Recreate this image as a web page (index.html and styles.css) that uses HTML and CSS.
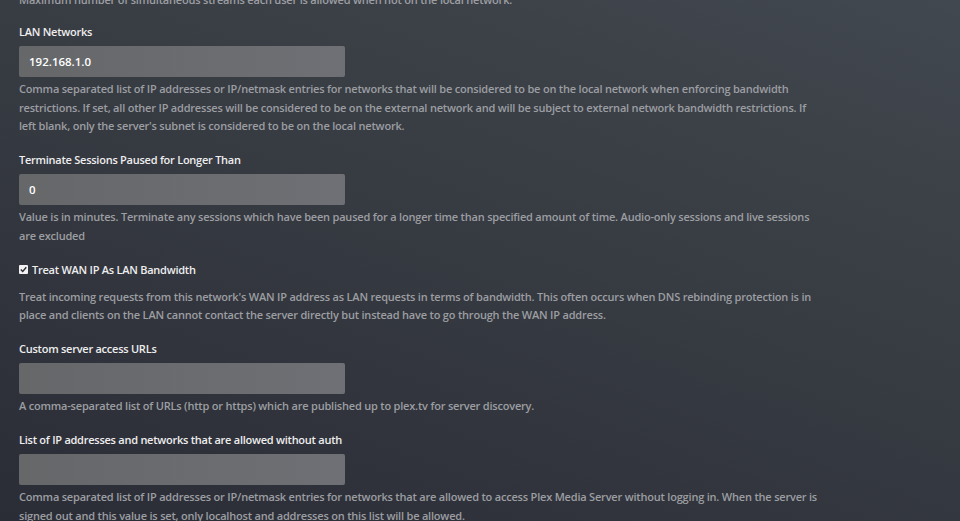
FILE: index.html
```html
<!DOCTYPE html>
<html lang="en">
<head>
<meta charset="utf-8">
<title>Network Settings</title>
<link rel="stylesheet" href="styles.css">
</head>
<body>
<main class="settings">
  <div class="group group-first">
    <p class="help help-top">Maximum number of simultaneous streams each user is allowed when not on the local network.</p>
  </div>

  <div class="group">
    <label class="label" for="lan">LAN Networks</label>
    <input class="field" id="lan" type="text" value="192.168.1.0">
    <p class="help">Comma separated list of IP addresses or IP/netmask entries for networks that will be considered to be on the local network when enforcing bandwidth restrictions. If set, all other IP addresses will be considered to be on the external network and will be subject to external network bandwidth restrictions. If left blank, only the server's subnet is considered to be on the local network.</p>
  </div>

  <div class="group">
    <label class="label" for="term">Terminate Sessions Paused for Longer Than</label>
    <input class="field" id="term" type="text" value="0">
    <p class="help">Value is in minutes. Terminate any sessions which have been paused for a longer time than specified amount of time. Audio-only sessions and live sessions are excluded</p>
  </div>

  <div class="group">
    <label class="check-label"><span class="check"><svg viewBox="0 0 9 9" width="9" height="9"><rect x="0" y="0" width="9" height="9" rx="1" fill="#f2f2f2"/><path d="M1.8 4.6 L3.7 6.5 L7.3 2.2" fill="none" stroke="#2b2d33" stroke-width="1.4"/></svg></span>Treat WAN IP As LAN Bandwidth</label>
    <p class="help help-check">Treat incoming requests from this network's WAN IP address as LAN requests in terms of bandwidth. This often occurs when DNS rebinding protection is in place and clients on the LAN cannot contact the server directly but instead have to go through the WAN IP address.</p>
  </div>

  <div class="group">
    <label class="label" for="urls">Custom server access URLs</label>
    <input class="field" id="urls" type="text" value="">
    <p class="help">A comma-separated list of URLs (http or https) which are published up to plex.tv for server discovery.</p>
  </div>

  <div class="group">
    <label class="label" for="noauth">List of IP addresses and networks that are allowed without auth</label>
    <input class="field" id="noauth" type="text" value="">
    <p class="help">Comma separated list of IP addresses or IP/netmask entries for networks that are allowed to access Plex Media Server without logging in. When the server is signed out and this value is set, only localhost and addresses on this list will be allowed.</p>
  </div>
</main>
</body>
</html>
```

FILE: styles.css
```css
html, body {
  margin: 0;
  padding: 0;
  height: 100%;
}
body {
  background: linear-gradient(200deg, #42484f 0%, #373b42 45%, #2b2d36 100%);
  font-family: "Open Sans", "Liberation Sans", sans-serif;
  overflow: hidden;
}
.settings {
  width: 802px;
  padding: 0 0 0 19px;
  margin-top: -9.5px;
}
.group {
  margin-bottom: 15.5px;
}
.group-first {
  margin-bottom: 14px;
}
.label, .check-label {
  display: block;
  color: #eeeeee;
  font-size: 11px;
  font-weight: 600;
  letter-spacing: -0.25px;
  line-height: 18px;
  margin-bottom: 5px;
}
.check-label {
  display: flex;
  align-items: center;
  gap: 4px;
  margin-bottom: 9.25px;
}
.check {
  display: flex;
  width: 9px;
  height: 9px;
}
.field {
  display: block;
  box-sizing: border-box;
  width: 326px;
  height: 31px;
  margin: 0;
  padding: 0 10px;
  border: 0;
  border-radius: 2px;
  background: linear-gradient(90deg, #656769, #6e7075);
  color: #ffffff;
  font-family: "Open Sans", "Liberation Sans", sans-serif;
  font-size: 11.5px;
  font-weight: 600;
  outline: none;
}
.help {
  margin: 3px 0 0;
  color: #9c9ea2;
  font-size: 11px;
  font-weight: 600;
  letter-spacing: -0.2px;
  line-height: 18.5px;
}
.help-top {
  margin-top: 0;
}
.help-check {
  margin-top: 0;
}
```
